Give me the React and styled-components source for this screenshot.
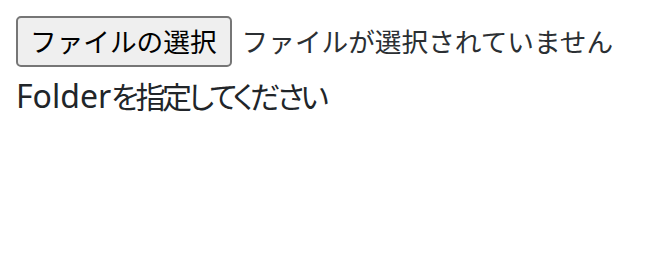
import React from "react";
import styled, { createGlobalStyle } from "styled-components";

const Global = createGlobalStyle`
  html, body { margin: 0; padding: 0; background: #ffffff; }
  body {
    font-family: "Noto Sans", "Noto Sans CJK JP", sans-serif;
    color: #212529;
  }
`;

const Page = styled.div`
  padding: 16px;
  display: flex;
  flex-direction: column;
`;

const FileRow = styled.div`
  display: flex;
  align-items: center;
  gap: 10px;
`;

const FileButton = styled.button`
  height: 51px;
  padding: 0 13px 0 12px;
  border: 2px solid #767676;
  border-radius: 5px;
  background: #efefef;
  color: #000000;
  font-family: "Noto Sans CJK JP", sans-serif;
  font-size: 26.67px;
  line-height: 1;
  cursor: pointer;
`;

const FileLabel = styled.span`
  font-family: "Noto Sans CJK JP", sans-serif;
  font-size: 26.67px;
  color: #2b2f33;
  line-height: 1;
`;

const Prompt = styled.p`
  margin: 8px 0 0;
  font-size: 32px;
  line-height: 40px;
`;

const PromptJa = styled.span`
  font-family: "Noto Sans CJK JP", sans-serif;
  font-size: 30px;
  letter-spacing: -3.4px;
  font-feature-settings: "palt";
`;

export default function App() {
  return (
    <>
      <Global />
      <Page>
        <FileRow>
          <FileButton type="button">ファイルの選択</FileButton>
          <FileLabel>ファイルが選択されていません</FileLabel>
        </FileRow>
        <Prompt>
          Folder<PromptJa>を指定してください</PromptJa>
        </Prompt>
      </Page>
    </>
  );
}
